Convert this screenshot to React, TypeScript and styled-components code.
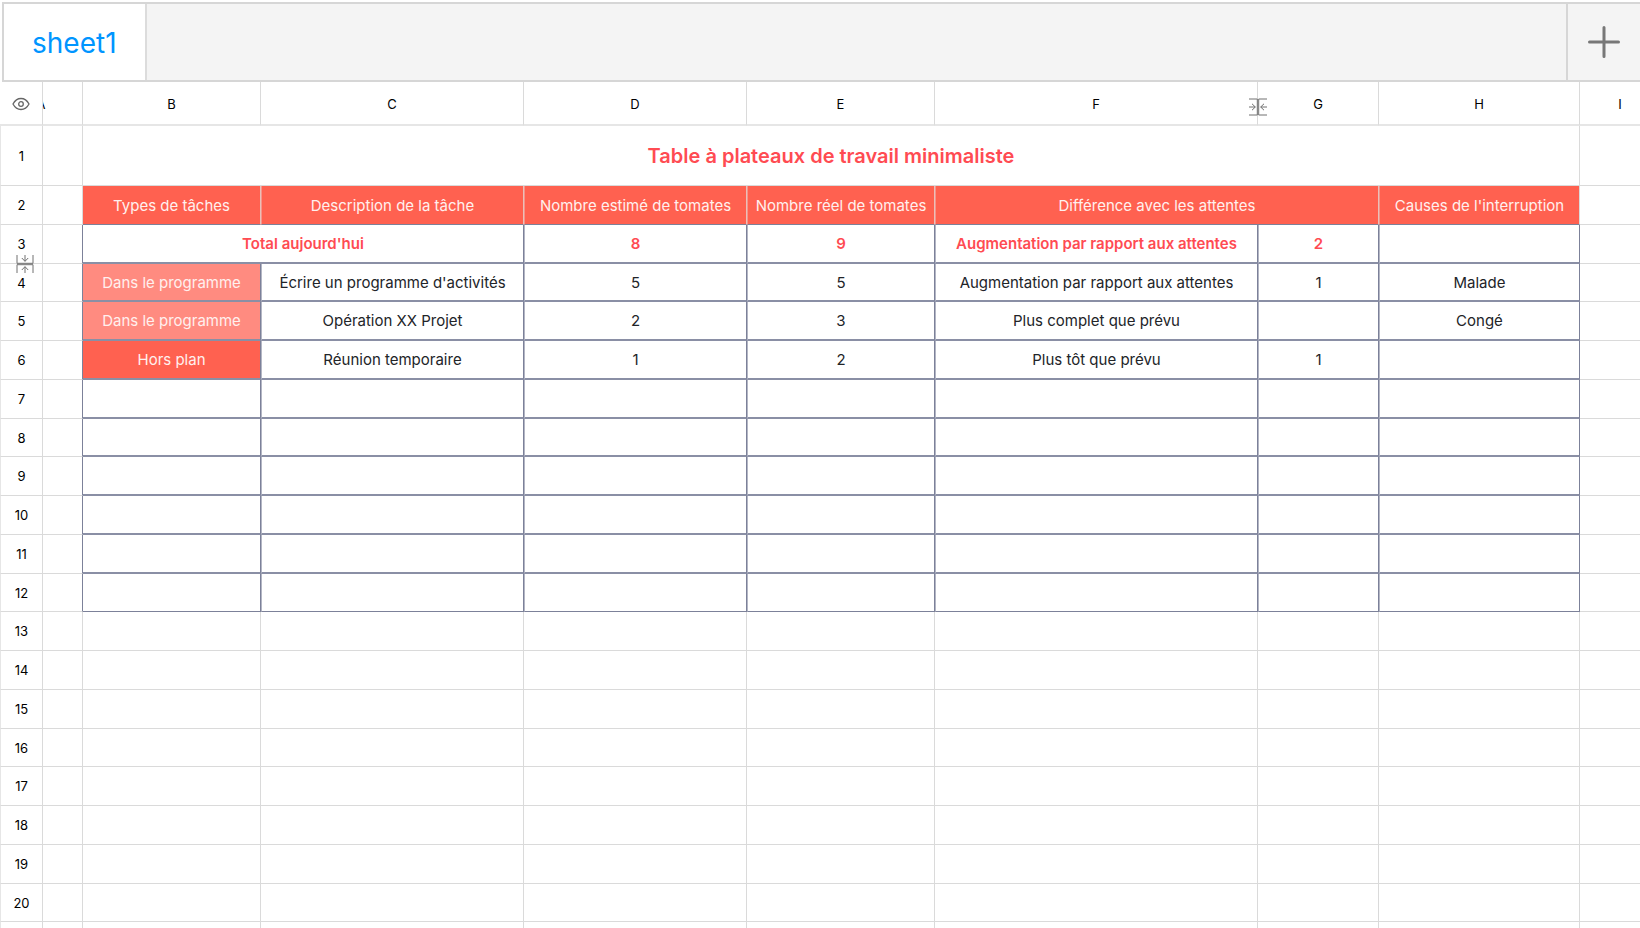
import React from "react";
import styled, { createGlobalStyle } from "styled-components";

const LINE = "#dadada";
const GRID = "#7c8199";
const GRID_SOFT = "#b3b6c4";
const CORAL = "#ff6150";

const GlobalStyle = createGlobalStyle`
  * { box-sizing: border-box; }
  html, body { margin: 0; background: #fff; }
  html, body, #root { height: 100%; }
  body { font-family: Inter, "Liberation Sans", sans-serif; color: #000; overflow: hidden; }
  button { font: inherit; padding: 0; margin: 0; background: none; border: 0; cursor: pointer; }
`;

const Page = styled.main`
  display: flex;
  flex-direction: column;
  min-height: 100%;
`;

const TabBar = styled.nav`
  display: flex;
  flex: none;
  height: 80px;
  margin: 2px 0 0 2px;
  background: #f4f4f4;
  border: 2px solid #d6d6d6;
  border-right: 0;
`;

const SheetTab = styled.button`
  padding: 2px 28px 0;
  background: #fff;
  border-right: 2px solid #dcdcdc;
  color: #0095ff;
  font-size: 28px;
  line-height: 32px;
`;

const AddButton = styled.button`
  display: flex;
  align-items: center;
  justify-content: center;
  width: 74px;
  margin-left: auto;
  border-left: 2px solid #d6d6d6;
`;

const SheetArea = styled.section`
  flex: 1;
  overflow: hidden;
`;

const Grid = styled.table`
  table-layout: fixed;
  width: max(100%, 1661px);
  border-collapse: separate;
  border-spacing: 0;
`;

const Row = styled.tr<{ $height: number }>`
  height: ${(p) => p.$height}px;
`;

const ColHead = styled.th`
  position: relative;
  padding: 2px 0 0;
  border-right: 1px solid ${LINE};
  border-bottom: 2px solid #e6e6e6;
  font-size: 13px;
  font-weight: 400;
  line-height: 16px;
`;

const ClippedHead = styled.div`
  display: flex;
  justify-content: flex-end;
  overflow: hidden;
`;

const ClippedLabel = styled.span`
  flex: none;
  width: 82px;
`;

const CornerButton = styled.button`
  display: flex;
  align-items: center;
  justify-content: center;
  width: 100%;
`;

const RowHead = styled.th`
  position: relative;
  padding: 0;
  border-left: 1px solid #e6e6e6;
  border-right: 1px solid ${LINE};
  border-bottom: 1px solid ${LINE};
  font-size: 13px;
  font-weight: 400;
  line-height: 16px;
`;

type Tone = "plain" | "title" | "head" | "total" | "body" | "soft" | "strong";

const fills: Partial<Record<Tone, string>> = { head: CORAL, soft: "#ff8b80", strong: CORAL };
const inks: Partial<Record<Tone, string>> = {
  title: "#ff4b52",
  total: "#ff4b52",
  head: "#fff0ee",
  soft: "#fff0ee",
  strong: "#fff0ee",
};

const Cell = styled.td<{ $tone: Tone; $left?: string; $right: string; $bottom: string; $thick?: boolean }>`
  padding: ${(p) => (p.$tone === "head" ? 2 : 1)}px 0 0;
  background: ${(p) => fills[p.$tone] ?? "#fff"};
  color: ${(p) => inks[p.$tone] ?? "#222428"};
  border-left: ${(p) => (p.$left ? `1px solid ${p.$left}` : 0)};
  border-right: 1px solid ${(p) => p.$right};
  border-bottom: ${(p) => (p.$thick ? 2 : 1)}px solid ${(p) => p.$bottom};
  text-align: center;
  white-space: nowrap;
  font-size: ${(p) => (p.$tone === "title" ? 20 : 15)}px;
  font-weight: ${(p) => (p.$tone === "title" || p.$tone === "total" ? 600 : 400)};
  line-height: ${(p) => (p.$tone === "title" ? 26 : 18)}px;
`;

const ColCollapse = styled.button`
  position: absolute;
  right: -10px;
  top: 16px;
  width: 18px;
  height: 18px;
  z-index: 1;
`;

const RowCollapse = styled.button`
  position: absolute;
  left: 15px;
  bottom: -10px;
  width: 18px;
  height: 18px;
  z-index: 1;
`;

const CollapseIcon = ({ vertical }: { vertical?: boolean }) => (
  <svg width="18" height="18" viewBox="0 0 18 18" fill="none" stroke="#707070" strokeWidth="1" display="block">
    <g transform={vertical ? "rotate(90 9 9)" : undefined}>
      <path d="M0 1H8.300V17H0M18 1H9.700V17H18" />
      <path d="M0 9H6.300M3 5.800L6.300 9L3 12.200M18 9H11.700M15 5.800L11.700 9L15 12.200" />
    </g>
  </svg>
);

const columns = [
  { name: "rows", width: 43 },
  { name: "A", width: 40 },
  { name: "B", width: 178 },
  { name: "C", width: 263 },
  { name: "D", width: 223 },
  { name: "E", width: 188 },
  { name: "F", width: 323 },
  { name: "G", width: 121 },
  { name: "H", width: 201 },
  { name: "I", width: 81 },
];

type Item = { text?: string; span?: number; tone?: Tone };

const content: Record<number, Item[]> = {
  1: [{ text: "Table à plateaux de travail minimaliste", span: 7, tone: "title" }],
  2: [
    { text: "Types de tâches" },
    { text: "Description de la tâche" },
    { text: "Nombre estimé de tomates" },
    { text: "Nombre réel de tomates" },
    { text: "Différence avec les attentes", span: 2 },
    { text: "Causes de l'interruption" },
  ],
  3: [
    { text: "Total aujourd'hui", span: 2 },
    { text: "8" },
    { text: "9" },
    { text: "Augmentation par rapport aux attentes" },
    { text: "2" },
    {},
  ],
  4: [
    { text: "Dans le programme", tone: "soft" },
    { text: "Écrire un programme d'activités" },
    { text: "5" },
    { text: "5" },
    { text: "Augmentation par rapport aux attentes" },
    { text: "1" },
    { text: "Malade" },
  ],
  5: [
    { text: "Dans le programme", tone: "soft" },
    { text: "Opération XX Projet" },
    { text: "2" },
    { text: "3" },
    { text: "Plus complet que prévu" },
    {},
    { text: "Congé" },
  ],
  6: [
    { text: "Hors plan", tone: "strong" },
    { text: "Réunion temporaire" },
    { text: "1" },
    { text: "2" },
    { text: "Plus tôt que prévu" },
    { text: "1" },
    {},
  ],
};

const rowNumbers = Array.from({ length: 21 }, (_, i) => i + 1);

const rowHeight = (n: number) => {
  if (n === 1) return 60;
  return n % 4 === 0 ? 38 : 39;
};

const rowTone = (n: number): Tone => {
  if (n === 2) return "head";
  if (n === 3) return "total";
  return n <= 12 ? "body" : "plain";
};

const SheetRow = ({ n }: { n: number }) => {
  const items: Item[] = content[n] ?? Array.from({ length: 7 }, () => ({}));
  const framed = n >= 3 && n <= 12;
  const bottom = n >= 2 && n <= 12 ? GRID : LINE;
  const inner = framed ? GRID : n === 2 ? "#e9c0ba" : LINE;
  return (
    <Row $height={rowHeight(n)}>
      <RowHead scope="row">
        {n <= 20 ? n : null}
        {n === 3 && (
          <RowCollapse aria-label="Afficher les lignes masquées">
            <CollapseIcon vertical />
          </RowCollapse>
        )}
      </RowHead>
      <Cell $tone="plain" $right={framed ? GRID : LINE} $bottom={LINE} />
      {items.map((item, i) => (
        <Cell
          key={i}
          colSpan={item.span}
          $tone={item.tone ?? rowTone(n)}
          $left={framed && i > 0 ? GRID_SOFT : n === 2 && i > 0 ? "#f7948a" : undefined}
          $right={n === 2 && i === items.length - 1 ? LINE : inner}
          $bottom={framed && n < 12 ? "#8a8fa5" : bottom}
          $thick={framed && n < 12}
        >
          {item.text}
        </Cell>
      ))}
      <Cell $tone="plain" $right={LINE} $bottom={LINE} />
    </Row>
  );
};

export default function App() {
  return (
    <Page>
      <GlobalStyle />
      <TabBar>
        <SheetTab>sheet1</SheetTab>
        <AddButton aria-label="Ajouter une feuille">
          <svg width="32" height="32" viewBox="0 0 32 32" stroke="#777" strokeWidth="3" strokeLinecap="round">
            <path d="M16 1.500V30.500M1.500 16H30.500" />
          </svg>
        </AddButton>
      </TabBar>
      <SheetArea>
        <Grid>
          <colgroup>
            {columns.map((c) => (
              <col key={c.name} width={c.width} />
            ))}
          </colgroup>
          <thead>
            <Row $height={44}>
              <ColHead>
                <CornerButton aria-label="Affichage">
                  <svg width="18" height="14" viewBox="0 0 18 14" fill="none" stroke="#666" strokeWidth="1.300">
                    <path d="M1 7C3 3.200 5.800 1.500 9 1.500S15 3.200 17 7C15 10.800 12.200 12.500 9 12.500S3 10.800 1 7Z" />
                    <circle cx="9" cy="7" r="2.300" />
                  </svg>
                </CornerButton>
              </ColHead>
              {columns.slice(1).map(({ name }) => (
                <ColHead key={name} scope="col">
                  {name === "A" ? (
                    <ClippedHead>
                      <ClippedLabel>A</ClippedLabel>
                    </ClippedHead>
                  ) : (
                    name
                  )}
                  {name === "F" && (
                    <ColCollapse aria-label="Afficher les colonnes masquées">
                      <CollapseIcon />
                    </ColCollapse>
                  )}
                </ColHead>
              ))}
            </Row>
          </thead>
          <tbody>
            {rowNumbers.map((n) => (
              <SheetRow key={n} n={n} />
            ))}
          </tbody>
        </Grid>
      </SheetArea>
    </Page>
  );
}
